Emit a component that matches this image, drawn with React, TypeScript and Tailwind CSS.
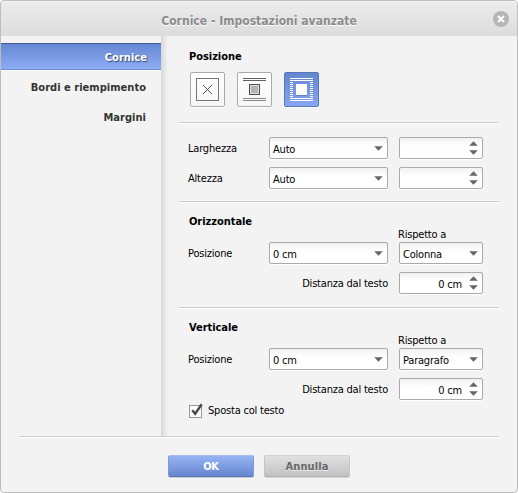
import type { ReactNode } from "react";

function Label({ children, className = "" }: { children: ReactNode; className?: string }) {
  return <span className={`block whitespace-nowrap leading-[14px] ${className}`}>{children}</span>;
}

function Down() {
  return (
    <svg width="9" height="5" viewBox="0 0 9 5" className="block">
      <path d="M.2 .2h8.6L4.5 4.8z" fill="#666" />
    </svg>
  );
}

function Up() {
  return (
    <svg width="9" height="5" viewBox="0 0 9 5" className="block">
      <path d="M.2 4.8h8.6L4.5 .2z" fill="#666" />
    </svg>
  );
}

const box =
  "flex h-[22px] items-center rounded-[2px] border border-[#aaa] bg-linear-to-b from-[#f1f1f1] via-white via-40% to-white shadow-[0_1px_0_#fff]";

function Select({ value, className }: { value: string; className: string }) {
  return (
    <div className={`${box} ${className} justify-between pr-1 pl-[3px]`}>
      <Label className="pt-[4px]">{value}</Label>
      <Down />
    </div>
  );
}

function Spinner({ value = "" }: { value?: string }) {
  return (
    <div className={`${box} ml-[11px] w-[84px] justify-end pr-[4px]`}>
      <Label className="pt-[4px] pr-[7px]">{value}</Label>
      <div className="flex flex-col gap-[4px]">
        <Up />
        <Down />
      </div>
    </div>
  );
}

function Rule() {
  return <div className="h-[2px] w-full shrink-0 border-t border-[#ccc] bg-white" />;
}

function Heading({ children }: { children: ReactNode }) {
  return <h2 className="pl-[10px] leading-[14px] font-bold tracking-[-0.05px] whitespace-nowrap">{children}</h2>;
}

function Group({ title, reference }: { title: string; reference: string }) {
  return (
    <>
      <Heading>{title}</Heading>
      <Label className="-mt-px pl-[219px]">Rispetto a</Label>
      <div className="flex h-[22px] items-center pl-[9px]">
        <Label className="w-[81px] pt-[2px]">Posizione</Label>
        <Select value="0 cm" className="w-[119px]" />
        <Select value={reference} className="ml-[11px] w-[84px]" />
      </div>
      <div className="mt-[8px] flex h-[22px] items-center pl-[9px]">
        <Label className="w-[200px] pt-[2px] text-right">Distanza dal testo</Label>
        <Spinner value="0 cm" />
      </div>
    </>
  );
}

const tile = "flex size-[35px] items-center justify-center rounded-[2px] border";
const plain = "border-[#aaa] bg-linear-to-b from-white to-[#f6f6f6] shadow-[0_1px_0_#fff]";

function WrapTiles() {
  return (
    <div className="flex gap-[12px] pl-[11px]">
      <div className={`${tile} ${plain}`}>
        <svg width="23" height="23" shapeRendering="crispEdges">
          <rect x=".5" y=".5" width="22" height="22" fill="none" stroke="#777" />
          {[0, 1, 2, 3, 4, 5, 6, 7, 8].map((i) => (
            <g key={i} fill="#555">
              <rect x={7 + i} y={7 + i} width="1" height="1" />
              <rect x={15 - i} y={7 + i} width="1" height="1" />
            </g>
          ))}
        </svg>
      </div>
      <div className={`${tile} ${plain}`}>
        <svg width="23" height="23" shapeRendering="crispEdges">
          <path d="M0 .5h23M0 2.5h23" stroke="#606060" />
          <path d="M0 20.5h23M0 22.5h23" stroke="#8b8b8b" />
          <rect x="6.5" y="6.5" width="10" height="10" fill="#ddd" stroke="#505050" />
          <rect x="8" y="8" width="7" height="7" fill="#b4b4b4" />
        </svg>
      </div>
      <div className={`${tile} border-[#5877b8] bg-linear-to-b from-[#6286cf] to-[#87a7f0] shadow-[0_1px_0_#fff]`}>
        <svg width="23" height="24" className="mt-px" shapeRendering="crispEdges">
          <path d="M6 17.5h11" stroke="#6382cb" />
          <path d="M0 .5h23M0 2.5h23M0 20.5h23M0 22.5h23" stroke="#fff" />
          {[4, 6, 8, 10, 12, 14, 16, 18].map((y) => (
            <path key={y} d={`M0 ${y + 0.5}h3M20 ${y + 0.5}h3`} stroke="#fff" />
          ))}
          <rect x="6" y="6" width="11" height="11" fill="#fff" />
        </svg>
      </div>
    </div>
  );
}

export default function App() {
  return (
    <div className="flex h-[493px] w-[518px] flex-col overflow-hidden rounded-[4px] border border-[#bdbdbd] bg-[#f3f3f3] font-['DejaVu_Sans_Condensed','DejaVu_Sans',sans-serif] text-[11px] tracking-[-0.2px] text-black">
      <header className="relative flex h-[35px] shrink-0 items-center justify-center border-t border-[#f6f6f6] bg-linear-to-b from-[#ececec] to-[#dcdcdc] pt-[3px]">
        <h1 className="text-[12px] leading-4 font-bold tracking-[0.02px] text-[#8b8b8b] [text-shadow:0_1px_0_#fff]">
          Cornice - Impostazioni avanzate
        </h1>
        <svg width="16" height="16" className="absolute top-[9px] right-[8px]">
          <circle cx="8" cy="8" r="8" fill="#b6b6b6" />
          <path d="M5 5l6 6M11 5l-6 6" stroke="#fff" strokeWidth="2" />
        </svg>
      </header>
      <div className="flex h-[400px] shrink-0">
        <nav className="w-[160px] pt-[7px] text-right text-[11px] font-bold tracking-[0.03px] text-[#333]">
          <div className="h-[27px] border-t border-b border-t-[#425b92] border-b-[#6b8bd0] bg-linear-to-b from-[#6688d2] to-[#8dadf5] pt-[6px] pr-[14px] leading-4 text-white shadow-[0_1px_0_#fff] [text-shadow:1px_1px_1px_#34466f]">
            Cornice
          </div>
          <div className="pt-[10px] pr-[15px] leading-4">Bordi e riempimento</div>
          <div className="pt-[14px] pr-[15px] leading-4">Margini</div>
        </nav>
        <div className="w-[7px] bg-linear-to-r from-[#d8d8d8] to-[#f3f3f3]" />
        <main className="ml-[11px] w-[320px]">
          <div className="h-[86px] pt-[14px]">
            <Heading>Posizione</Heading>
            <div className="h-[8px]" />
            <WrapTiles />
          </div>
          <Rule />
          <div className="flex h-[77px] flex-col gap-[8px] pt-[13px]">
            {["Larghezza", "Altezza"].map((name) => (
              <div key={name} className="flex h-[22px] items-center pl-[9px]">
                <Label className="w-[81px] pt-[2px]">{name}</Label>
                <Select value="Auto" className="w-[119px]" />
                <Spinner />
              </div>
            ))}
          </div>
          <Rule />
          <div className="h-[104px] pt-[12px]">
            <Group title="Orizzontale" reference="Colonna" />
          </div>
          <Rule />
          <div className="pt-[12px]">
            <Group title="Verticale" reference="Paragrafo" />
            <div className="mt-[2px] flex h-[17px] items-end gap-[5px] pl-[10px]">
              <svg width="14" height="17">
                <rect x=".5" y="3.5" width="12" height="12" fill="#fafafa" stroke="#999" />
                <path d="M3.2 8.2l3 3.5 6.5-9.5" fill="none" stroke="#4b4b4b" strokeWidth="2.4" />
              </svg>
              <Label className="pb-[1px]">Sposta col testo</Label>
            </div>
          </div>
        </main>
      </div>
      <div className="ml-[18px] w-[480px]">
        <Rule />
      </div>
      <footer className="flex gap-[10px] pt-[17px] pl-[167px] text-center font-bold leading-[21px]">
        <button className="h-[22px] w-[86px] rounded-[2px] border border-t-[#a5bdf0] border-x-[#7d9ade] border-b-[#5877b8] bg-linear-to-b from-[#98b4f4] to-[#6686d0] text-white shadow-[0_1px_0_#d0d0d0]">
          OK
        </button>
        <button className="h-[22px] w-[86px] rounded-[2px] border border-t-[#d4d4d4] border-x-[#c4c4c4] border-b-[#b0b0b0] bg-linear-to-b from-[#e0e0e0] to-[#c2c2c2] tracking-[0.1px] text-[#666] shadow-[0_1px_0_#d8d8d8] [text-shadow:0_1px_0_#eee]">
          Annulla
        </button>
      </footer>
    </div>
  );
}
